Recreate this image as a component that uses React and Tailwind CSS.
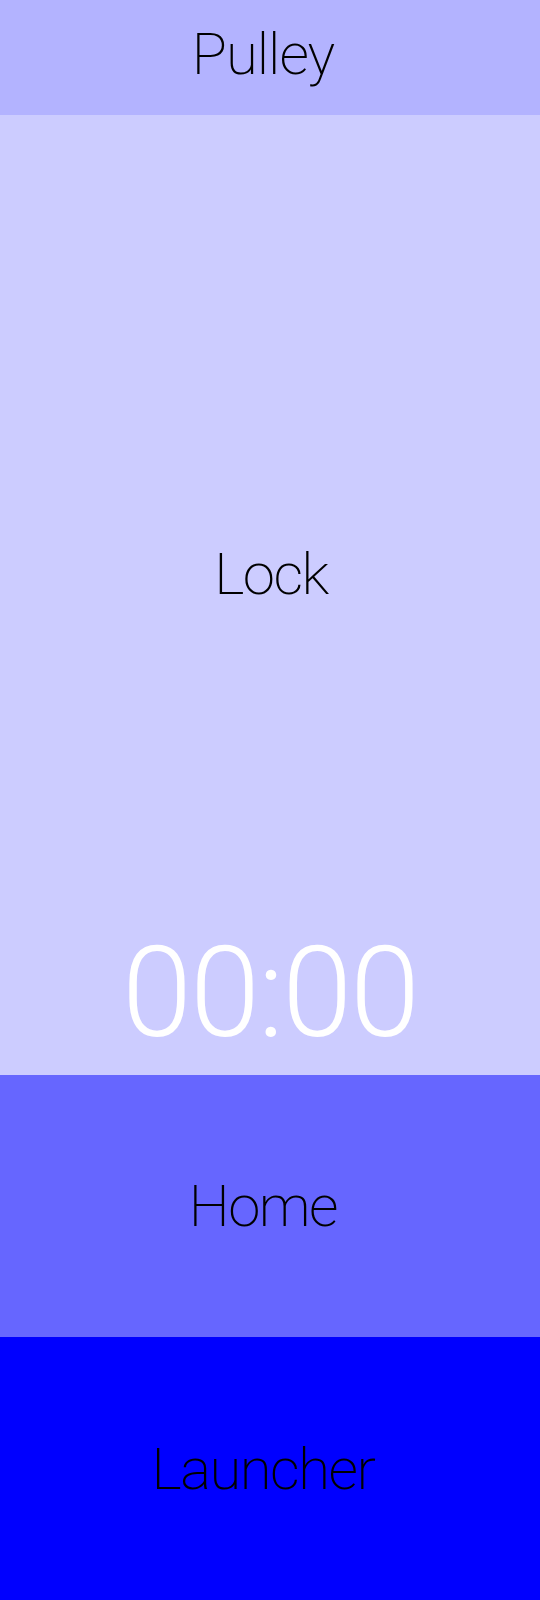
export default function App() {
  const font = { fontFamily: '"Roboto", "Noto Sans", sans-serif' };
  return (
    <div className="w-[540px] h-[1600px] flex flex-col font-extralight text-black" style={font}>
      <div className="h-[115px] bg-[#b3b3ff] flex items-center justify-center pr-[14px] pb-[8px]">
        <span className="text-[58px] leading-none tracking-[-1px]">Pulley</span>
      </div>
      <div className="h-[960px] bg-[#ccccff] flex flex-col items-center pt-[430px]">
        <span className="text-[58px] leading-none tracking-[-1.5px] pl-[2px]">Lock</span>
        <span className="mt-[327px] text-[126px] leading-none tracking-[-2px] font-light text-white">00:00</span>
      </div>
      <div className="h-[262px] bg-[#6666ff] flex items-center justify-center pr-[14px]">
        <span className="text-[58px] leading-none tracking-[-1.5px]">Home</span>
      </div>
      <div className="h-[263px] bg-[#0000ff] flex items-center justify-center pr-[14px]">
        <span className="text-[58px] leading-none tracking-[-1.5px]">Launcher</span>
      </div>
    </div>
  );
}
